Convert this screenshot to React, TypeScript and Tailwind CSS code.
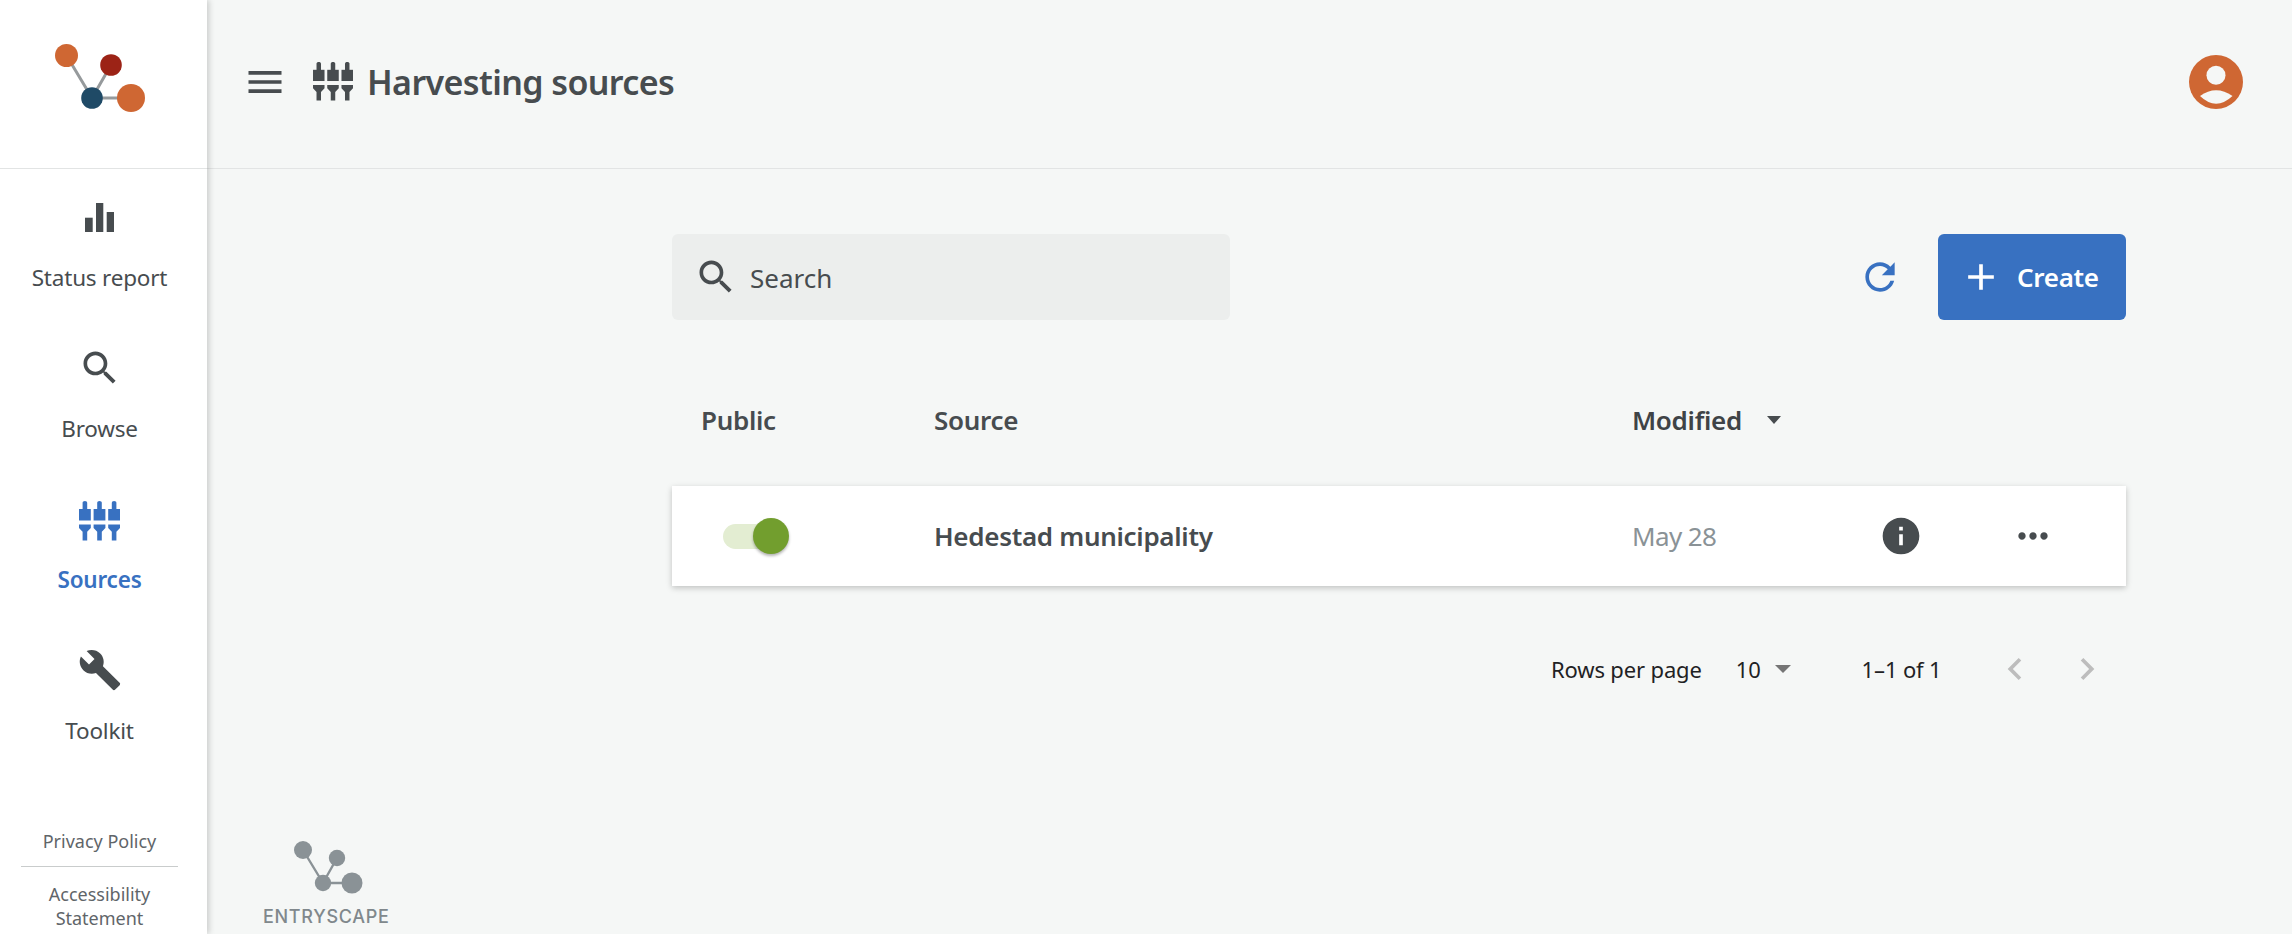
const paths = {
  menu: "M3 18h18v-2H3v2zm0-5h18v-2H3v2zm0-7v2h18V6H3z",
  search:
    "M15.5 14h-.79l-.28-.27C15.41 12.59 16 11.11 16 9.5 16 5.91 13.09 3 9.5 3S3 5.91 3 9.5 5.91 16 9.5 16c1.61 0 3.09-.59 4.23-1.57l.27.28v.79l5 4.99L20.49 19l-4.99-5zm-6 0C7.01 14 5 11.99 5 9.5S7.01 5 9.5 5 14 7.01 14 9.5 11.99 14 9.5 14z",
  build:
    "M22.7 19l-9.1-9.1c.9-2.3.4-5-1.5-6.9-2-2-5-2.4-7.4-1.3L9 6 6 9 1.6 4.7C.4 7.1.9 10.1 2.9 12.1c1.9 1.9 4.6 2.4 6.9 1.5l9.1 9.1c.4.4 1 .4 1.4 0l2.3-2.3c.5-.4.5-1.1.1-1.4z",
  refresh:
    "M17.65 6.35C16.2 4.9 14.21 4 12 4c-4.42 0-7.99 3.58-7.99 8s3.57 8 7.99 8c3.73 0 6.84-2.55 7.73-6h-2.08c-.82 2.33-3.04 4-5.65 4-3.31 0-6-2.69-6-6s2.69-6 6-6c1.66 0 3.14.69 4.22 1.78L13 11h7V4l-2.35 2.35z",
  add: "M19 13h-6v6h-2v-6H5v-2h6V5h2v6h6v2z",
  info: "M12 2C6.48 2 2 6.48 2 12s4.48 10 10 10 10-4.48 10-10S17.52 2 12 2zm1 15h-2v-6h2v6zm0-8h-2V7h2v2z",
  more: "M6 10c-1.1 0-2 .9-2 2s.9 2 2 2 2-.9 2-2-.9-2-2-2zm12 0c-1.1 0-2 .9-2 2s.9 2 2 2 2-.9 2-2-.9-2-2-2zm-6 0c-1.1 0-2 .9-2 2s.9 2 2 2 2-.9 2-2-.9-2-2-2z",
  left: "M15.41 7.41 14 6l-6 6 6 6 1.41-1.41L10.83 12z",
  right: "M10 6 8.59 7.41 13.17 12l-4.58 4.59L10 18l6-6z",
};

function MaterialIcon({ d, className }: { d: string; className: string }) {
  return (
    <svg viewBox="0 0 24 24" fill="currentColor" className={className}>
      <path d={d} />
    </svg>
  );
}

function BarsIcon() {
  return (
    <svg viewBox="0 0 29 29" fill="currentColor" className="w-[29px] h-[29px]">
      <rect x="0" y="14.7" width="7.7" height="14.3" />
      <rect x="11" y="0" width="7.3" height="29" />
      <rect x="21.7" y="9" width="7.3" height="20" />
    </svg>
  );
}

function PlugsIcon({ className }: { className: string }) {
  return (
    <svg viewBox="0 0 41 40" fill="currentColor" className={className}>
      {[0, 14.6, 29.2].map((x) => (
        <g key={x} transform={`translate(${x} 0)`}>
          <path d="M3.6 9V1.9C3.6.7 4.6 0 5.9 0S8.2.7 8.2 1.9V9z" />
          <rect x="0" y="8" width="11.8" height="11.5" />
          <path d="M0 23.5h11.8V27L8.2 30.8v8.7H3.6V30.8L0 27z" />
        </g>
      ))}
    </svg>
  );
}

function Logo({ className }: { className: string }) {
  return (
    <svg viewBox="0 0 100 70" className={className}>
      <path d="M11.5 11.5 37 54M37 54 56 21M37 54H76" stroke="#969a9c" strokeWidth="3" fill="none" />
      <circle cx="11.5" cy="11.5" r="11.5" fill="#cf6733" />
      <circle cx="56" cy="21" r="10.8" fill="#9c2316" />
      <circle cx="37" cy="54" r="10.8" fill="#1f4a66" />
      <circle cx="76" cy="54" r="14" fill="#cf6733" />
    </svg>
  );
}

function GreyLogo({ className }: { className: string }) {
  return (
    <svg viewBox="0 0 70 62" fill="#8a9296" className={className}>
      <path d="M9 9 29 42M29 42 43 17M29 42H58" stroke="#8a9296" strokeWidth="2.4" fill="none" />
      <circle cx="9" cy="9" r="9" />
      <circle cx="43" cy="17" r="8.2" />
      <circle cx="29" cy="42" r="8.2" />
      <circle cx="58" cy="42" r="10.5" />
    </svg>
  );
}

function Avatar() {
  return (
    <svg viewBox="0 0 54 54" className="w-[54px] h-[54px]">
      <circle cx="27" cy="27" r="27" fill="#cf6733" />
      <circle cx="27" cy="20.3" r="9.5" fill="#f5f7f6" />
      <path d="M11 41Q27 29.6 43.5 41Q27 56.4 11 41Z" fill="#f5f7f6" />
    </svg>
  );
}

function NavItem({ label, active, children }: { label: string; active?: boolean; children: React.ReactNode }) {
  return (
    <div className={`h-[151px] flex flex-col items-center ${active ? "text-[#3871c1] font-semibold" : "text-[#474c4f]"}`}>
      <div className="h-12 flex items-center justify-center">{children}</div>
      <div className="mt-[22px] text-[22.5px] leading-[30px] tracking-[-0.2px]">{label}</div>
    </div>
  );
}

function Sidebar() {
  return (
    <aside className="relative z-10 w-[207px] shrink-0 h-full bg-white shadow-[2px_0_6px_rgba(0,0,0,0.18)] flex flex-col overflow-hidden">
      <div className="h-[169px] shrink-0 border-b border-[#e2e4e4] flex items-start pt-[44px] pl-[55px]">
        <Logo className="w-[100px] h-[70px]" />
      </div>
      <nav className="pt-[24px] pr-[8px]">
        <NavItem label="Status report">
          <BarsIcon />
        </NavItem>
        <NavItem label="Browse">
          <MaterialIcon d={paths.search} className="w-11 h-11" />
        </NavItem>
        <NavItem label="Sources" active>
          <PlugsIcon className="w-[41px] h-10 mt-[3px]" />
        </NavItem>
        <NavItem label="Toolkit">
          <MaterialIcon d={paths.build} className="w-11 h-11" />
        </NavItem>
      </nav>
      <div className="mt-auto pr-[8px] flex flex-col items-center text-[#5f6569] text-[18px] leading-[24px] pb-[4px]">
        <div className="pb-[13px]">Privacy Policy</div>
        <div className="w-[157px] border-t border-[#c9cccc]" />
        <div className="pt-[15px] text-center">
          Accessibility
          <br />
          Statement
        </div>
      </div>
    </aside>
  );
}

function Toggle() {
  return (
    <div className="relative w-[57px] h-[25px] rounded-full bg-[#e3edd2]">
      <div className="absolute right-[-9px] top-[-5.5px] w-9 h-9 rounded-full bg-[#729e2e] shadow-[0_2px_3px_rgba(0,0,0,0.3)]" />
    </div>
  );
}

function Caret({ className }: { className: string }) {
  return <div className={`w-0 h-0 border-x-transparent border-t-[8px] ${className}`} />;
}

export default function App() {
  return (
    <div className="flex w-full h-screen overflow-hidden bg-[#f5f7f6] text-[#474c4f] font-['Noto_Sans',sans-serif]">
      <Sidebar />
      <main className="flex-1 min-w-0 flex flex-col">
        <header className="h-[169px] shrink-0 border-b border-[#e2e4e4] flex items-center pl-[36px] pr-[49px]">
          <MaterialIcon d={paths.menu} className="w-11 h-11 -mt-[5px]" />
          <PlugsIcon className="ml-[26px] w-[40px] h-[39px] -mt-[5px]" />
          <h1 className="ml-[14px] text-[34px] leading-[44px] font-semibold tracking-[-0.6px] -mt-[5px]">Harvesting sources</h1>
          <div className="ml-auto -mt-[5px]">
            <Avatar />
          </div>
        </header>

        <div className="w-[1454px] ml-[465px] pt-[65px]">
          <div className="flex items-center h-[86px]">
            <div className="w-[558px] h-full rounded-md bg-[#eceeed] flex items-center pl-[22px]">
              <MaterialIcon d={paths.search} className="w-11 h-11" />
              <span className="ml-[12px] mt-[3px] text-[26px]">Search</span>
            </div>
            <MaterialIcon d={paths.refresh} className="ml-auto w-11 h-11 text-[#3871c1]" />
            <button className="ml-[36px] w-[188px] h-full rounded-md bg-[#3871c1] text-white flex items-center pl-[21px]">
              <MaterialIcon d={paths.add} className="w-11 h-11" />
              <span className="ml-[14px] text-[26px] font-semibold tracking-[-0.3px]">Create</span>
            </button>
          </div>

          <div className="flex items-center h-[166px] pt-[34px] text-[26px] font-semibold tracking-[-0.3px]">
            <div className="w-[262px] pl-[29px]">Public</div>
            <div className="w-[698px]">Source</div>
            <div className="flex items-center text-[#3f4346]">
              Modified
              <Caret className="ml-[25px] border-x-[7.5px] border-t-[#474c4f]" />
            </div>
          </div>

          <div className="h-[100px] bg-white shadow-[0_2px_6px_rgba(0,0,0,0.22)] flex items-center text-[26px] tracking-[-0.3px]">
            <div className="w-[262px] pl-[51px]">
              <Toggle />
            </div>
            <div className="w-[698px] font-semibold">Hedestad municipality</div>
            <div className="w-[247px] text-[#8a9296] tracking-[-0.6px]">May 28</div>
            <MaterialIcon d={paths.info} className="w-11 h-11" />
            <MaterialIcon d={paths.more} className="ml-[88px] w-11 h-11" />
          </div>

          <div className="flex items-center h-[56px] mt-[55px] text-[22px] tracking-[-0.15px] text-[#1f2224]">
            <span className="ml-[879px]">Rows per page</span>
            <span className="ml-[34px]">10</span>
            <Caret className="ml-[14px] border-x-[8.5px] border-t-[#757575]" />
            <span className="ml-[71px]">1–1 of 1</span>
            <MaterialIcon d={paths.left} className="ml-[52px] w-11 h-11 text-[#bdbdbd]" />
            <MaterialIcon d={paths.right} className="ml-[28px] w-11 h-11 text-[#bdbdbd]" />
          </div>
        </div>

        <div className="mt-auto pl-[56px] pb-[6px] w-fit flex flex-col items-center">
          <GreyLogo className="ml-[6px] w-[70px] h-[62px]" />
          <div className="mt-[3px] text-[18px] leading-[22px] font-medium tracking-[0.7px] text-[#80888c] font-['Inter',sans-serif]">ENTRYSCAPE</div>
        </div>
      </main>
    </div>
  );
}
